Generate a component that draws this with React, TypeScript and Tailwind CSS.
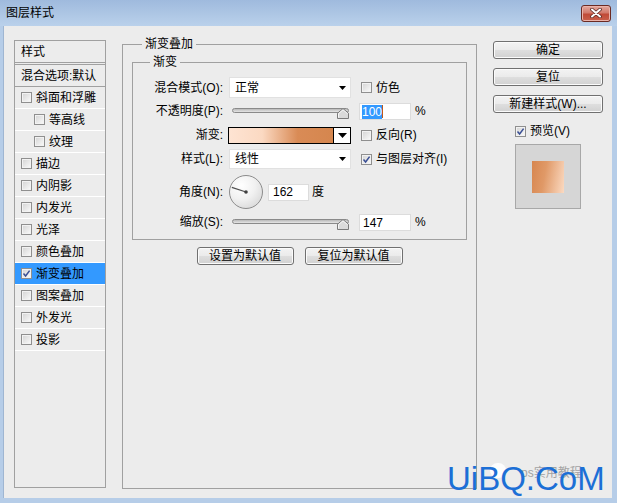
import React from "react";

const effects = [
  { name: "斜面和浮雕" },
  { name: "等高线", indent: true },
  { name: "纹理", indent: true },
  { name: "描边" },
  { name: "内阴影" },
  { name: "内发光" },
  { name: "光泽" },
  { name: "颜色叠加" },
  { name: "渐变叠加", checked: true, selected: true },
  { name: "图案叠加" },
  { name: "外发光" },
  { name: "投影" },
];

function Check({ on = false }: { on?: boolean }) {
  return (
    <span className="flex h-[11px] w-[11px] shrink-0 items-center justify-center border border-[#8f8f8f] bg-gradient-to-br from-[#d3d3d3] to-[#fbfbfb] shadow-[inset_0_0_0_1px_#f2f2f2]">
      {on && (
        <svg width="9" height="9" viewBox="0 0 9 9">
          <path d="M1.5 4.6L3.6 7L7.6 1.6" fill="none" stroke="#3a4f94" strokeWidth="1.5" />
        </svg>
      )}
    </span>
  );
}

function Slider() {
  return (
    <div className="relative mt-[5px] h-[11px] w-[122px] pl-[3px]">
      <div className="h-[5px] w-[117px] rounded-full border border-[#8a8a8a] bg-gradient-to-b from-[#b9b9b9] to-[#e6e6e6]" />
      {/* thumb */}
      <svg className="absolute left-[108px] top-0" width="12" height="11" viewBox="0 0 12 11">
        <path d="M0.5 10.5V5.2L6 0.6L11.5 5.2V10.5Z" fill="#dadada" stroke="#7a7a7a" />
        <path d="M1.5 9.5V5.6L6 1.9L10.5 5.6" fill="none" stroke="#f6f6f6" />
      </svg>
    </div>
  );
}

function Select({ value }: { value: string }) {
  return (
    <div className="ml-[6px] flex h-full w-[122px] items-center justify-between border border-[#e1e1e1] bg-white pl-[5px] pr-[4px]">
      <span>{value}</span>
      <svg width="7" height="4" viewBox="0 0 7 4">
        <path d="M0 0H7L3.5 4Z" fill="#000" />
      </svg>
    </div>
  );
}

function Btn({ children, className = "" }: { children: React.ReactNode; className?: string }) {
  return (
    <div
      className={`flex h-[18px] items-center justify-center rounded-[3px] border border-[#707070] bg-[linear-gradient(#f3f3f3_0%,#ebebeb_48%,#dedede_52%,#d1d1d1_100%)] leading-4 shadow-[inset_0_0_0_1px_#fbfbfb] ${className}`}
    >
      {children}
    </div>
  );
}

export default function App() {
  return (
    <div className="relative flex h-[503px] w-[617px] flex-col overflow-hidden bg-[#b6cde8] font-['Liberation_Sans','Noto_Sans_CJK_SC',sans-serif] text-[12px] text-black">
      {/* Title bar */}
      <div className="flex h-[26px] shrink-0 items-center justify-between bg-gradient-to-b from-[#9fbadd] to-[#bad1eb] px-[6px]">
        <span className="leading-4">图层样式</span>
        <div className="flex h-[17px] w-[30px] items-center justify-center rounded-[3px] border border-[#6b2a22] bg-[linear-gradient(#e4a99e_0%,#d27a6c_45%,#c04a37_55%,#c9604c_100%)] shadow-[inset_0_0_0_1px_#eab3aa]">
          <svg width="12" height="10" viewBox="0 0 12 10">
            <path d="M2 1.5L10 8.5M10 1.5L2 8.5" stroke="#5a2a26" strokeWidth="3.6" strokeLinecap="round" />
            <path d="M2 1.5L10 8.5M10 1.5L2 8.5" stroke="#ffffff" strokeWidth="2" strokeLinecap="round" />
          </svg>
        </div>
      </div>

      {/* Body */}
      <div className="mb-[5px] ml-[3px] mr-[5px] flex flex-1 items-start bg-[#ececec] pl-[11px] pt-[10px] shadow-[inset_1px_0_0_#9fb6d2]">
        {/* Left: effects list */}
        <div className="mt-[4px] flex h-[448px] w-[92px] shrink-0 flex-col border border-[#a0a0a0]">
          <div className="flex h-[22px] items-center border-b border-[#a0a0a0] pl-[6px]">样式</div>
          <div className="mt-px flex h-[23px] items-center border-y border-[#a0a0a0] pl-[6px] whitespace-nowrap">
            混合选项:默认
          </div>
          {effects.map((e) => (
            <div
              key={e.name}
              className={`flex h-[22px] items-center gap-[4px] border-b border-white ${
                e.indent ? "pl-[19px]" : "pl-[6px]"
              } ${e.selected ? "bg-[#3399ff]" : ""}`}
            >
              <Check on={e.checked} />
              <span className="whitespace-nowrap">{e.name}</span>
            </div>
          ))}
        </div>

        {/* Middle: Gradient Overlay */}
        <fieldset className="ml-[16px] h-[453px] w-[355px] shrink-0 border border-[#a0a0a0] px-[9px]">
          <legend className="ml-[10px] px-[3px] leading-4">渐变叠加</legend>

          <fieldset className="mt-[2px] border border-[#a0a0a0] pb-[8px]">
            <legend className="ml-[17px] px-[3px] leading-4">渐变</legend>

            {/* blend mode */}
            <div className="mt-[7px] flex h-[21px] items-center">
              <span className="w-[90px] text-right">混合模式(O):</span>
              <Select value="正常" />
              <span className="ml-[10px] flex items-center gap-[4px]">
                <Check />
                仿色
              </span>
            </div>

            {/* opacity */}
            <div className="mt-[5px] flex h-[17px] items-start">
              <span className="w-[90px] text-right leading-[17px]">不透明度(P):</span>
              <div className="ml-[6px]">
                <Slider />
              </div>
              <div className="ml-[8px] flex h-[17px] w-[52px] items-center border border-[#dcdcdc] bg-white pl-[2px]">
                <span className="bg-[#3399ff] leading-[14px] text-white">100</span>
                <span className="h-[13px] w-px bg-[#c05a1a]" />
              </div>
              <span className="ml-[4px] leading-[17px]">%</span>
            </div>

            {/* gradient */}
            <div className="mt-[7px] flex h-[16px] items-center">
              <span className="w-[90px] text-right">渐变:</span>
              <div className="ml-[5px] flex h-[17px] w-[123px] border border-black bg-white">
                <div className="flex-1 bg-[linear-gradient(90deg,#fee4d3_0%,#fbd9c2_32%,#d98b56_66%,#d5864e_100%)]" />
                <div className="flex w-[17px] items-center justify-center border-l border-black">
                  <svg width="9" height="5" viewBox="0 0 9 5">
                    <path d="M0 0H9L4.5 5Z" fill="#000" />
                  </svg>
                </div>
              </div>
              <span className="ml-[10px] flex items-center gap-[4px]">
                <Check />
                反向(R)
              </span>
            </div>

            {/* style */}
            <div className="mt-[6px] flex h-[20px] items-center">
              <span className="w-[90px] text-right">样式(L):</span>
              <Select value="线性" />
              <span className="ml-[10px] flex items-center gap-[4px] whitespace-nowrap">
                <Check on />
                与图层对齐(I)
              </span>
            </div>

            {/* angle */}
            <div className="mt-[6px] flex h-[34px] items-center">
              <span className="w-[90px] text-right">角度(N):</span>
              <div className="ml-[6px] h-[34px] w-[34px] rounded-full border border-[#8c8c8c] bg-[radial-gradient(circle_at_35%_30%,#ffffff_0%,#f1f1f1_45%,#cfcfcf_100%)]">
                <svg width="32" height="32" viewBox="0 0 32 32">
                  <path d="M16 16L1.8 11.4" stroke="#505050" strokeWidth="1.2" />
                  <circle cx="16" cy="16" r="1.8" fill="#404040" />
                </svg>
              </div>
              <div className="ml-[5px] flex h-[17px] w-[41px] items-center border border-[#dcdcdc] bg-white pl-[4px]">162</div>
              <span className="ml-[3px]">度</span>
            </div>

            {/* scale */}
            <div className="mt-[5px] flex h-[17px] items-start">
              <span className="w-[90px] text-right leading-[17px]">缩放(S):</span>
              <div className="ml-[6px]">
                <Slider />
              </div>
              <div className="ml-[8px] flex h-[17px] w-[52px] items-center border border-[#dcdcdc] bg-white pl-[3px]">147</div>
              <span className="ml-[4px] leading-[17px]">%</span>
            </div>
          </fieldset>

          <div className="mt-[7px] flex justify-center gap-[11px]">
            <Btn className="w-[97px]">设置为默认值</Btn>
            <Btn className="w-[98px]">复位为默认值</Btn>
          </div>
        </fieldset>

        {/* Right column */}
        <div className="ml-[16px] mt-[5px] flex w-[110px] shrink-0 flex-col">
          <Btn className="border-[#3c7fb1] shadow-[inset_0_0_0_1px_#9fd5f5]">确定</Btn>
          <Btn className="mt-[9px]">复位</Btn>
          <Btn className="mt-[9px] whitespace-nowrap">新建样式(W)...</Btn>
          <div className="mt-[11px] flex h-[14px] items-center gap-[4px] pl-[22px]">
            <Check on />
            预览(V)
          </div>
          <div className="ml-[22px] mt-[6px] flex h-[65px] w-[66px] items-center justify-center border border-[#a8a8a8] bg-[#d6d6d6]">
            <div className="h-[32px] w-[32px] bg-[linear-gradient(100deg,#d7864f_0%,#e09967_40%,#fbdac2_100%)]" />
          </div>
        </div>
      </div>

      {/* watermark over the dialog */}
      <div className="absolute left-[490px] top-[463px] h-[15px] w-[16px] rounded-full bg-white/90" />
      <span className="absolute left-[521px] top-[466px] text-[12px] leading-[14px] text-[#a3a3a3]">ps实用教程</span>
      <span className="absolute left-[447px] top-[462px] text-[33px] leading-[33px] text-[#1c6fd6]">UiBQ.CoM</span>
    </div>
  );
}
